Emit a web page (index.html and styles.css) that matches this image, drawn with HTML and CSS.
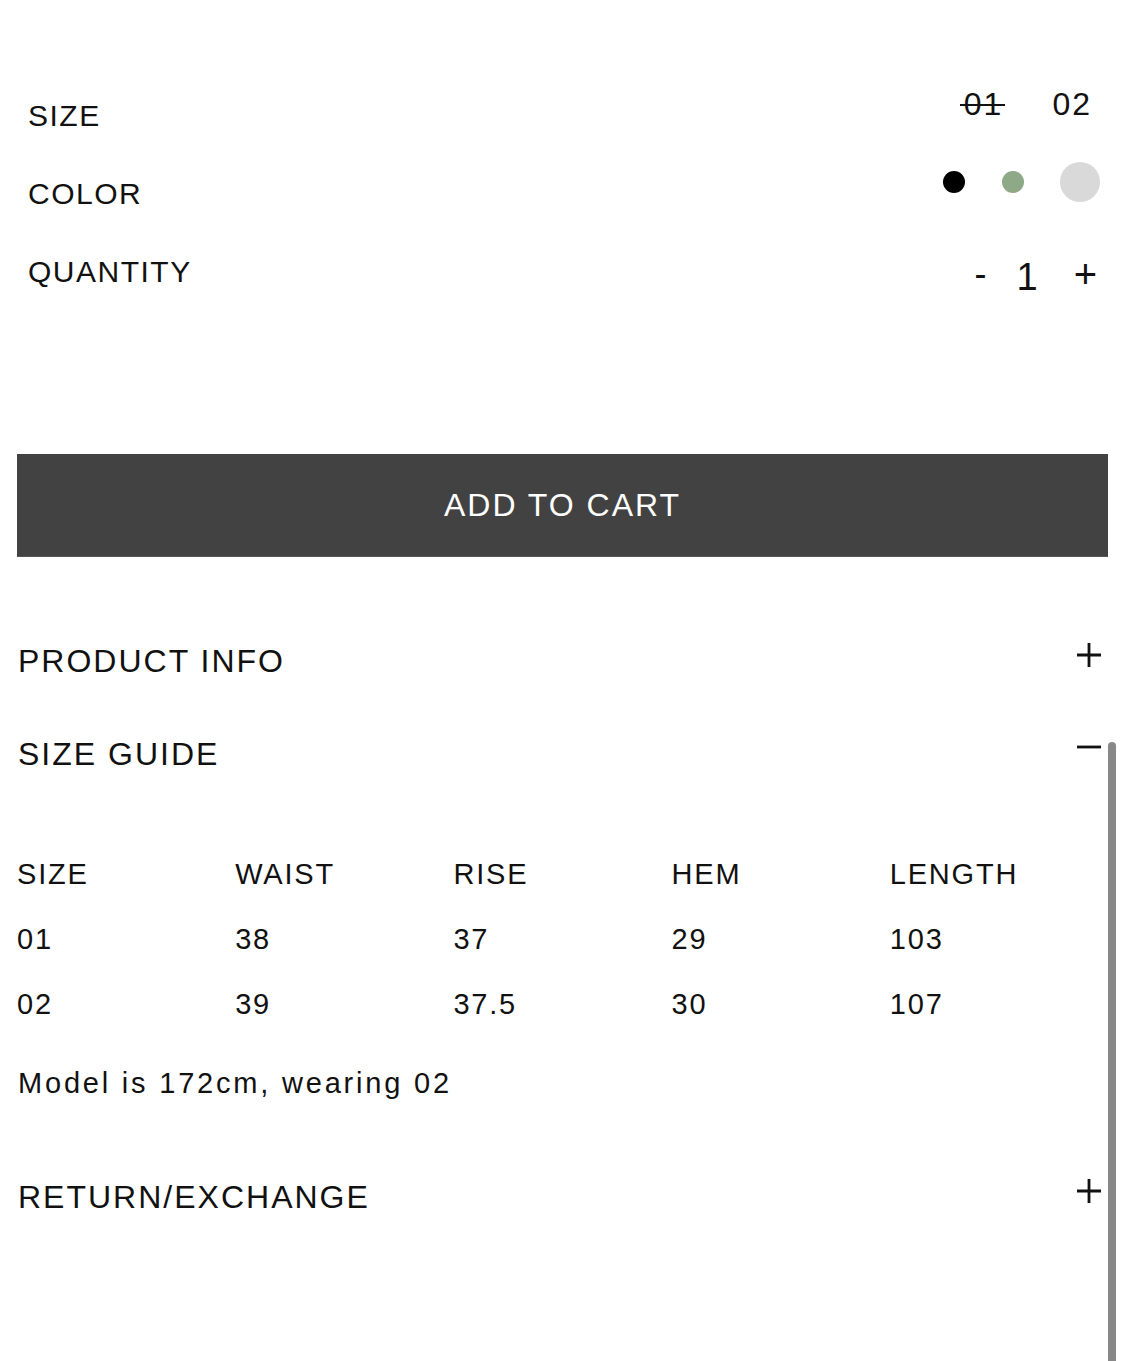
FILE: index.html
```html
<!DOCTYPE html>
<html lang="en">
<head>
<meta charset="utf-8">
<title>Product options</title>
<link rel="stylesheet" href="styles.css">
</head>
<body>
<div class="page">
  <section class="options">
    <div class="opt-row">
      <span class="opt-label">SIZE</span>
      <div class="sizes">
        <span class="size sold">01</span>
        <span class="size">02</span>
      </div>
    </div>
    <div class="opt-row">
      <span class="opt-label">COLOR</span>
      <div class="swatches">
        <span class="swatch black"></span>
        <span class="swatch green"></span>
        <span class="swatch light"></span>
      </div>
    </div>
    <div class="opt-row">
      <span class="opt-label">QUANTITY</span>
      <div class="qty">
        <span class="qty-btn minus">-</span>
        <span class="qty-val">1</span>
        <span class="qty-btn plus">+</span>
      </div>
    </div>
  </section>

  <div class="content">
    <button class="cart-btn">ADD TO CART</button>

    <div class="acc-head acc-first">
      <span class="acc-title">PRODUCT INFO</span>
      <svg class="acc-icon" width="26" height="26" viewBox="0 0 26 26"><path d="M13 1V25M1 13H25" stroke="#111" stroke-width="2.8" fill="none"/></svg>
    </div>

    <div class="acc-head">
      <span class="acc-title">SIZE GUIDE</span>
      <svg class="acc-icon minus-icon" width="26" height="26" viewBox="0 0 26 26"><path d="M1 13H25" stroke="#111" stroke-width="2.8" fill="none"/></svg>
    </div>

    <div class="size-table">
      <div class="cell th">SIZE</div>
      <div class="cell th">WAIST</div>
      <div class="cell th">RISE</div>
      <div class="cell th">HEM</div>
      <div class="cell th">LENGTH</div>
      <div class="cell">01</div>
      <div class="cell">38</div>
      <div class="cell">37</div>
      <div class="cell">29</div>
      <div class="cell">103</div>
      <div class="cell">02</div>
      <div class="cell">39</div>
      <div class="cell">37.5</div>
      <div class="cell">30</div>
      <div class="cell">107</div>
    </div>

    <p class="model-note">Model is 172cm, wearing 02</p>

    <div class="acc-head">
      <span class="acc-title">RETURN/EXCHANGE</span>
      <svg class="acc-icon" width="26" height="26" viewBox="0 0 26 26"><path d="M13 1V25M1 13H25" stroke="#111" stroke-width="2.8" fill="none"/></svg>
    </div>
  </div>
</div>
<div class="scrollbar"></div>
</body>
</html>
```

FILE: styles.css
```css
* { box-sizing: border-box; }

html, body {
  margin: 0;
  padding: 0;
  background: #fff;
}

body {
  font-family: "Liberation Sans", Arial, Helvetica, sans-serif;
  color: #111;
  width: 1125px;
  height: 1361px;
  overflow: hidden;
  position: relative;
}

.options {
  padding: 77px 25px 0 28px;
}

.opt-row {
  height: 78px;
  display: flex;
  align-items: center;
  justify-content: space-between;
}

.opt-label {
  font-size: 30px;
  letter-spacing: 1.5px;
}

.sizes {
  display: flex;
  gap: 49px;
  margin-right: 8px;
  padding-bottom: 24px;
  font-size: 32px;
  letter-spacing: 2px;
}

.size.sold {
  position: relative;
}

.size.sold::after {
  content: "";
  position: absolute;
  left: -4px;
  right: -2px;
  top: 50%;
  height: 2px;
  background: #111;
}

.swatches {
  display: flex;
  align-items: center;
  padding-bottom: 24px;
}

.swatch {
  display: block;
  border-radius: 50%;
}

.swatch.black {
  width: 22px;
  height: 22px;
  background: #000;
}

.swatch.green {
  width: 22px;
  height: 22px;
  background: #8ea987;
  margin-left: 37px;
}

.swatch.light {
  width: 40px;
  height: 40px;
  background: #d9d9d9;
  margin-left: 36px;
}

.qty {
  display: flex;
  align-items: center;
  margin-right: 3px;
  padding-top: 4px;
}

.qty-btn.minus {
  font-size: 36px;
  margin-right: 30px;
}

.qty-val {
  font-size: 38px;
  padding-top: 6px;
}

.qty-btn.plus {
  font-size: 40px;
  margin-left: 36px;
}

.content {
  padding: 143px 17px 0 17px;
}

.cart-btn {
  display: block;
  width: 100%;
  height: 103px;
  border: none;
  border-bottom: 1px solid #555;
  background: #424242;
  color: #fff;
  font-family: "Liberation Sans", Arial, Helvetica, sans-serif;
  font-size: 32px;
  letter-spacing: 2px;
  padding: 0;
  margin: 0;
}

.acc-head {
  height: 93px;
  display: flex;
  align-items: center;
  justify-content: space-between;
  padding-left: 1px;
}

.acc-first {
  margin-top: 58px;
}

.acc-title {
  font-size: 32px;
  letter-spacing: 2px;
}

.acc-icon {
  margin-right: 6px;
  margin-bottom: 14px;
}

.minus-icon {
  margin-bottom: 16px;
}

.size-table {
  display: grid;
  grid-template-columns: repeat(5, 1fr);
  grid-auto-rows: 65px;
  align-items: center;
  margin-top: 41px;
}

.cell {
  font-size: 29px;
  letter-spacing: 1.8px;
}

.model-note {
  margin: 26px 0 0 1px;
  height: 40px;
  line-height: 40px;
  font-size: 29px;
  letter-spacing: 2.8px;
}

.model-note + .acc-head {
  margin-top: 48px;
}

.scrollbar {
  position: absolute;
  left: 1108px;
  top: 742px;
  width: 8px;
  height: 640px;
  background: #888;
  border-radius: 4px;
}
```
